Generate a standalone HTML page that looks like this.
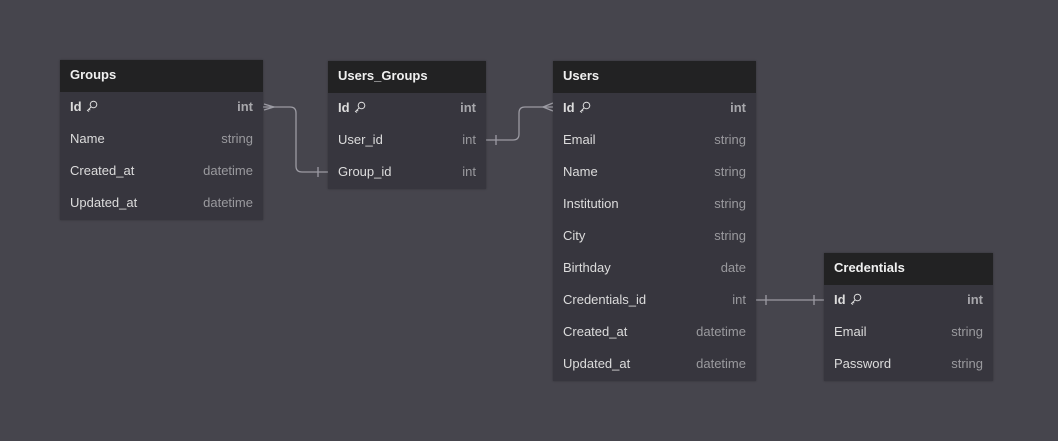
<!DOCTYPE html>
<html><head><meta charset="utf-8"><style>
body{margin:0;width:1058px;height:441px;background:#46454d;font-family:"Liberation Sans",sans-serif;position:relative;overflow:hidden}
.t{position:absolute;background:#37363e;box-shadow:0 0 2px rgba(0,0,0,.3)}
.h{height:32px;background:#222223;color:#f0f0f0;font-weight:bold;font-size:13px;line-height:29px;padding-left:10px}
.r{height:32px;line-height:30px;font-size:13px;color:#dcdcdc;padding:0 10px;display:flex;justify-content:space-between}
.r span:last-child{color:#9a9a9e}
.r.k{font-weight:bold}
.r.k span:last-child{color:#a8a8ac}
svg.key{width:12px;height:12px;vertical-align:-1px;margin-left:4px}
</style></head><body>
<svg width="1058" height="441" style="position:absolute;left:0;top:0" fill="none" stroke="#9c9ba3" stroke-width="1.3">
<path d="M263 107 H290 Q296 107 296 113 V166 Q296 172 302 172 H328"/>
<path d="M264 104 L274 107 L264 110"/>
<path d="M318 167 V177"/>
<path d="M486 140 H513 Q519 140 519 134 V113 Q519 107 525 107 H553"/>
<path d="M553 103 L543 107 L553 111"/>
<path d="M496 135 V145"/>
<path d="M756 300 H824"/>
<path d="M766 295 V305 M814 295 V305"/>
</svg>
<div class="t" style="left:60px;top:60px;width:203px">
<div class="h">Groups</div>
<div class="r k"><span>Id<svg class="key" viewBox="0 0 12 12" fill="none" stroke="#ddd" stroke-width="1"><circle cx="7.5" cy="4.5" r="3.3"/><path d="M5.2 6.8 L1.5 10.5 L3 11.5 M3 9 L4.2 10.2"/></svg></span><span>int</span></div>
<div class="r"><span>Name</span><span>string</span></div>
<div class="r"><span>Created_at</span><span>datetime</span></div>
<div class="r"><span>Updated_at</span><span>datetime</span></div>
</div>
<div class="t" style="left:328px;top:61px;width:158px">
<div class="h">Users_Groups</div>
<div class="r k"><span>Id<svg class="key" viewBox="0 0 12 12" fill="none" stroke="#ddd" stroke-width="1"><circle cx="7.5" cy="4.5" r="3.3"/><path d="M5.2 6.8 L1.5 10.5 L3 11.5 M3 9 L4.2 10.2"/></svg></span><span>int</span></div>
<div class="r"><span>User_id</span><span>int</span></div>
<div class="r"><span>Group_id</span><span>int</span></div>
</div>
<div class="t" style="left:553px;top:61px;width:203px">
<div class="h">Users</div>
<div class="r k"><span>Id<svg class="key" viewBox="0 0 12 12" fill="none" stroke="#ddd" stroke-width="1"><circle cx="7.5" cy="4.5" r="3.3"/><path d="M5.2 6.8 L1.5 10.5 L3 11.5 M3 9 L4.2 10.2"/></svg></span><span>int</span></div>
<div class="r"><span>Email</span><span>string</span></div>
<div class="r"><span>Name</span><span>string</span></div>
<div class="r"><span>Institution</span><span>string</span></div>
<div class="r"><span>City</span><span>string</span></div>
<div class="r"><span>Birthday</span><span>date</span></div>
<div class="r"><span>Credentials_id</span><span>int</span></div>
<div class="r"><span>Created_at</span><span>datetime</span></div>
<div class="r"><span>Updated_at</span><span>datetime</span></div>
</div>
<div class="t" style="left:824px;top:253px;width:169px">
<div class="h">Credentials</div>
<div class="r k"><span>Id<svg class="key" viewBox="0 0 12 12" fill="none" stroke="#ddd" stroke-width="1"><circle cx="7.5" cy="4.5" r="3.3"/><path d="M5.2 6.8 L1.5 10.5 L3 11.5 M3 9 L4.2 10.2"/></svg></span><span>int</span></div>
<div class="r"><span>Email</span><span>string</span></div>
<div class="r"><span>Password</span><span>string</span></div>
</div>
</body></html>
